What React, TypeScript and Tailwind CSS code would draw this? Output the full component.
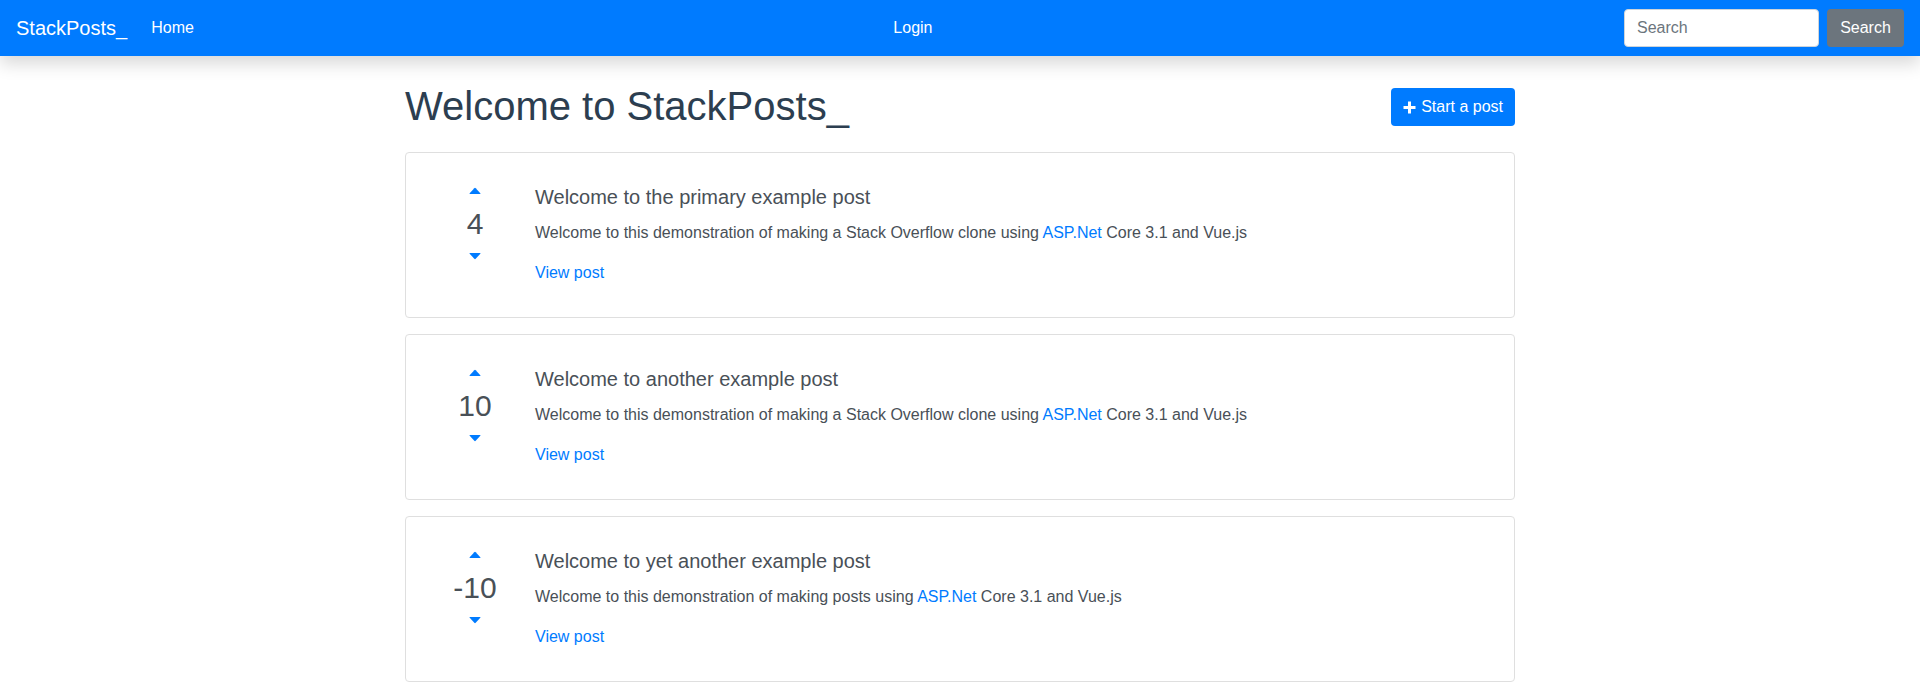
import React from "react";

type Post = {
  title: string;
  score: number;
  lead: string;
};

const posts: Post[] = [
  {
    title: "Welcome to the primary example post",
    score: 4,
    lead: "Welcome to this demonstration of making a Stack Overflow clone using",
  },
  {
    title: "Welcome to another example post",
    score: 10,
    lead: "Welcome to this demonstration of making a Stack Overflow clone using",
  },
  {
    title: "Welcome to yet another example post",
    score: -10,
    lead: "Welcome to this demonstration of making posts using",
  },
];

const CaretUp = () => (
  <svg width="12" height="7" viewBox="0 0 12 7" className="block">
    <path d="M1 7 L11 7 Q12 7 11.3 6.2 L6.7 1.2 Q6 0.5 5.3 1.2 L0.7 6.2 Q0 7 1 7 Z" fill="#007bff" />
  </svg>
);

const CaretDown = () => (
  <svg width="12" height="7" viewBox="0 0 12 7" className="block">
    <path d="M1 0 L11 0 Q12 0 11.3 0.8 L6.7 5.8 Q6 6.5 5.3 5.8 L0.7 0.8 Q0 0 1 0 Z" fill="#007bff" />
  </svg>
);

const PostCard = ({ post }: { post: Post }) => (
  <div className="flex border border-[#dfdfdf] rounded-[4px] bg-white pl-[9px] py-[32px] mb-[16px]">
    <div className="w-[120px] flex flex-col items-center pt-[2px]">
      <button className="h-[7px] w-[12px] flex items-center justify-center">
        <CaretUp />
      </button>
      <div className="text-[30px] leading-[36px] text-[#495057] mt-[12px]">{post.score}</div>
      <button className="h-[7px] w-[12px] flex items-center justify-center mt-[11px]">
        <CaretDown />
      </button>
    </div>
    <div className="flex-1">
      <h5 className="text-[20px] leading-[24px] text-[#495057] mb-[12px]">{post.title}</h5>
      <p className="text-[16px] leading-[24px] text-[#495057] mb-[16px]">
        {post.lead} <a className="text-[#007bff]">ASP.Net</a> Core 3.1 and Vue.js
      </p>
      <a className="text-[16px] leading-[24px] text-[#007bff] block">View post</a>
    </div>
  </div>
);

const App = () => {
  return (
    <div className="min-h-[696px] bg-white font-['Liberation_Sans',Arial,sans-serif]">
      <nav className="h-[56px] bg-[#007bff] flex items-center justify-between px-[16px] shadow-[0_8px_16px_rgba(0,0,0,0.15)] relative">
        <div className="flex items-center">
          <a className="text-white text-[20px] leading-[30px] mr-[16px]">StackPosts_</a>
          <a className="text-white text-[16px] leading-[24px] px-[8px]">Home</a>
        </div>
        <a className="text-white text-[16px] leading-[24px] px-[8px]">Login</a>
        <form className="flex items-center gap-[8px]">
          <input
            type="text"
            placeholder="Search"
            className="w-[195px] h-[38px] rounded-[4px] bg-white border border-[#ced4da] px-[12px] text-[16px] text-[#495057] placeholder:text-[#6c757d] outline-none"
          />
          <button
            type="button"
            className="h-[38px] w-[77px] rounded-[4px] bg-[#6c757d] text-white text-[16px]"
          >
            Search
          </button>
        </form>
      </nav>

      <main className="w-[1110px] mx-auto pt-[22px]">
        <div className="flex items-start justify-between mb-[22px]">
          <h1 className="text-[40px] leading-[48px] text-[#2c3e50] mt-[4px]">Welcome to StackPosts_</h1>
          <button className="h-[38px] mt-[10px] px-[12px] rounded-[4px] bg-[#007bff] text-white text-[16px] flex items-center gap-[5px]">
            <svg width="13" height="13" viewBox="0 0 13 13">
              <path d="M5 0.5 h3 v4.5 h4.5 v3 h-4.5 v4.5 h-3 v-4.5 h-4.5 v-3 h4.5 z" fill="white" />
            </svg>
            Start a post
          </button>
        </div>
        {posts.map((p) => (
          <PostCard key={p.title} post={p} />
        ))}
      </main>
    </div>
  );
};

export default App;
